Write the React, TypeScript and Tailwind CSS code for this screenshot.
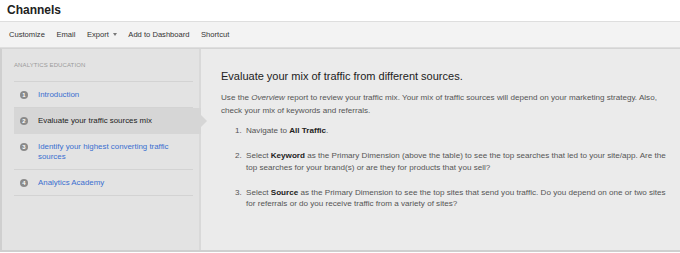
const steps = [
  { n: 1, label: 'Introduction' },
  { n: 2, label: 'Evaluate your traffic sources mix', active: true },
  { n: 3, label: 'Identify your highest converting traffic sources' },
  { n: 4, label: 'Analytics Academy' },
];

const Badge = ({ n }: { n: number }) => (
  <span className="flex h-[8px] w-[8px] shrink-0 items-center justify-center rounded-full bg-[#8a8a8a] text-[6px] font-bold leading-none text-white">
    {n}
  </span>
);

const App = () => {
  return (
    <div className="h-[253px] w-[680px] overflow-hidden bg-white font-['Liberation_Sans',Arial,sans-serif]">
      {/* Title */}
      <h1 className="h-[21px] pl-[7px] pt-[2px] text-[12px] font-bold leading-[16px] text-[#222]">
        Channels
      </h1>

      {/* Toolbar */}
      <div className="flex h-[27px] items-center gap-[11.5px] border-t border-b border-[#dedede] bg-[#f3f3f3] px-[9px] text-[7.6px] text-[#333]">
        <span>Customize</span>
        <span>Email</span>
        <span className="flex items-center gap-[4px]">
          Export
          <span className="h-0 w-0 border-x-[2.5px] border-t-[3px] border-x-transparent border-t-[#777]" />
        </span>
        <span>Add to Dashboard</span>
        <span>Shortcut</span>
      </div>

      {/* Main */}
      <div className="flex h-[204px] border-t border-b-2 border-l-2 border-[#cfcfcf] border-t-[#d4d4d4]">
        <aside className="relative w-[199px] shrink-0 border-r-2 border-[#d9d9d9] bg-[#e3e3e3] pl-[12px]">
          <div className="h-[32px] pt-[12px] text-[6px] uppercase leading-[8px] tracking-[0.1px] text-[#9a9a9a]">
            Analytics Education
          </div>
          <div className="mr-[6px] border-t border-[#d3d3d3]" />
          {steps.map((s) =>
            s.active ? (
              <div
                key={s.n}
                className="relative -mr-[2px] flex h-[26px] items-center gap-[10px] bg-[#d6d6d6] pl-[6px] text-[7.9px] text-[#222]"
              >
                <Badge n={s.n} />
                <span>{s.label}</span>
                <span className="absolute right-[-6px] top-[7px] h-0 w-0 border-y-[6px] border-l-[6px] border-y-transparent border-l-[#d6d6d6]" />
              </div>
            ) : (
              <div
                key={s.n}
                className="mr-[6px] flex items-start gap-[10px] border-b border-[#d3d3d3] py-[7.5px] pl-[6px] text-[7.9px] leading-[10px] text-[#3a6fd0]"
              >
                <span className="mt-[1px]">
                  <Badge n={s.n} />
                </span>
                <span className="w-[140px]">{s.label}</span>
              </div>
            )
          )}
        </aside>

        <section className="flex-1 bg-[#ebebeb] pl-[20px] pr-[12px] pt-[20px] text-[#555]">
          <h2 className="text-[11px] leading-[14px] text-[#222]">
            Evaluate your mix of traffic from different sources.
          </h2>
          <p className="mt-[7.5px] text-[8.1px] leading-[13px]">
            Use the <em>Overview</em> report to review your traffic mix. Your mix of traffic sources will depend on your
            marketing strategy. Also, check your mix of keywords and referrals.
          </p>
          <ol className="mt-[8.5px] flex flex-col gap-[13.5px] pl-[14px] text-[8.1px] leading-[11.5px]">
            <li className="flex gap-[5px]">
              <span className="w-[6px] shrink-0">1.</span>
              <span>
                Navigate to <b className="text-[#222]">All Traffic</b>.
              </span>
            </li>
            <li className="flex gap-[5px]">
              <span className="w-[6px] shrink-0">2.</span>
              <span>
                Select <b className="text-[#222]">Keyword</b> as the Primary Dimension (above the table) to see the top
                searches that led to your site/app. Are the top searches for your brand(s) or are they for products that
                you sell?
              </span>
            </li>
            <li className="flex gap-[5px]">
              <span className="w-[6px] shrink-0">3.</span>
              <span>
                Select <b className="text-[#222]">Source</b> as the Primary Dimension to see the top sites that send you
                traffic. Do you depend on one or two sites for referrals or do you receive traffic from a variety of
                sites?
              </span>
            </li>
          </ol>
        </section>
      </div>
    </div>
  );
};

export default App;
